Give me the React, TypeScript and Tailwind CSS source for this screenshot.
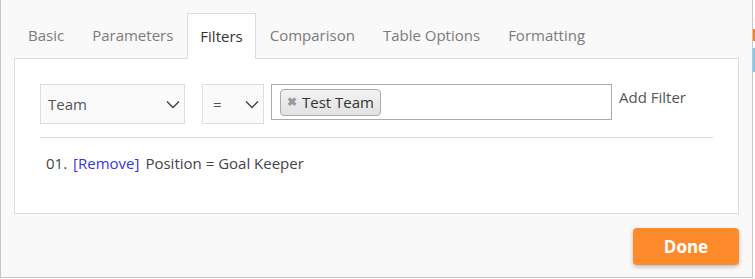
import React from "react";

const tabs = ["Basic", "Parameters", "Filters", "Comparison", "Table Options", "Formatting"];

const Chevron = () => (
  <svg width="14" height="9" viewBox="0 0 14 9" fill="none" stroke="#444" strokeWidth="1.4">
    <path d="M1 1.5 L7 7.5 L13 1.5" />
  </svg>
);

const App = () => {
  const active = "Filters";

  return (
    <div
      className="relative w-[755px] h-[279px] overflow-hidden bg-white"
      style={{ fontFamily: '"Open Sans", "Liberation Sans", sans-serif' }}
    >
      {/* page behind the modal, right strip */}
      <div className="absolute right-0 top-0 w-[2px] h-full bg-white">
        <div className="mt-[29px] h-[12px] bg-[#f5822a]" />
        <div className="mt-[7px] h-[24px] bg-[#7fcbe6]" />
      </div>

      {/* modal */}
      <div className="flex flex-col w-[753px] h-[278px] bg-[#f9f9f9] border-l border-r border-b border-[#c6c6c6]">
        {/* tabs */}
        <div className="flex flex-row mt-[13px] ml-[13px] h-[45px]">
          {tabs.map((tab) =>
            tab === active ? (
              <div
                key={tab}
                className="relative z-10 flex items-center px-[12px] h-[46px] bg-white border-l border-r border-t border-[#dcdcdc] text-[15px] text-[#333]"
              >
                {tab}
              </div>
            ) : (
              <div key={tab} className="flex items-center px-[14px] h-[45px] text-[15px] text-[#7b7b7b]">
                {tab}
              </div>
            ),
          )}
        </div>

        {/* panel */}
        <div className="mx-[13px] h-[156px] bg-white border border-[#dcdcdc] pt-[25px] pl-[25px] pr-[25px]">
          <div className="flex flex-row items-start">
            <div className="flex items-center justify-between w-[145px] h-[40px] pl-[7px] pr-[4px] bg-[#fafafa] border border-[#dedede] text-[15px] text-[#555]">
              <span>Team</span>
              <Chevron />
            </div>
            <div className="flex items-center justify-between w-[62px] h-[40px] ml-[17px] pl-[10px] pr-[4px] bg-[#fafafa] border border-[#dedede] text-[15px] text-[#555]">
              <span>=</span>
              <Chevron />
            </div>
            <div className="flex items-center w-[341px] h-[36px] ml-[7px] pl-[8px] bg-white border border-[#aaaaaa]">
              <div className="flex items-center h-[27px] px-[6px] rounded-[4px] border border-[#aaaaaa] bg-gradient-to-b from-[#f2f2f2] to-[#e2e2e2] text-[15px] text-[#333]">
                <span className="mr-[5px] text-[12px] font-bold text-[#999]">✖</span>
                <span>Test Team</span>
              </div>
            </div>
            <div className="ml-[7px] mt-[2px] text-[15px] text-[#555]">Add Filter</div>
          </div>

          <div className="mt-[13px] border-t border-[#dcdcdc]" />

          <div className="flex flex-row mt-[14px] pl-[6px] text-[15px] text-[#444]">
            <span>01.</span>
            <span className="ml-[6px] text-[#3535e8]">[Remove]</span>
            <span className="ml-[6px]">Position = Goal Keeper</span>
          </div>
        </div>

        {/* footer */}
        <div className="flex flex-row justify-end mt-[14px] mr-[13px]">
          <button className="w-[106px] h-[37px] rounded-[4px] bg-[#ff8a2b] text-white text-[17px] font-bold shadow-[0_2px_4px_rgba(0,0,0,0.25)]">
            Done
          </button>
        </div>
      </div>
    </div>
  );
};

export default App;
